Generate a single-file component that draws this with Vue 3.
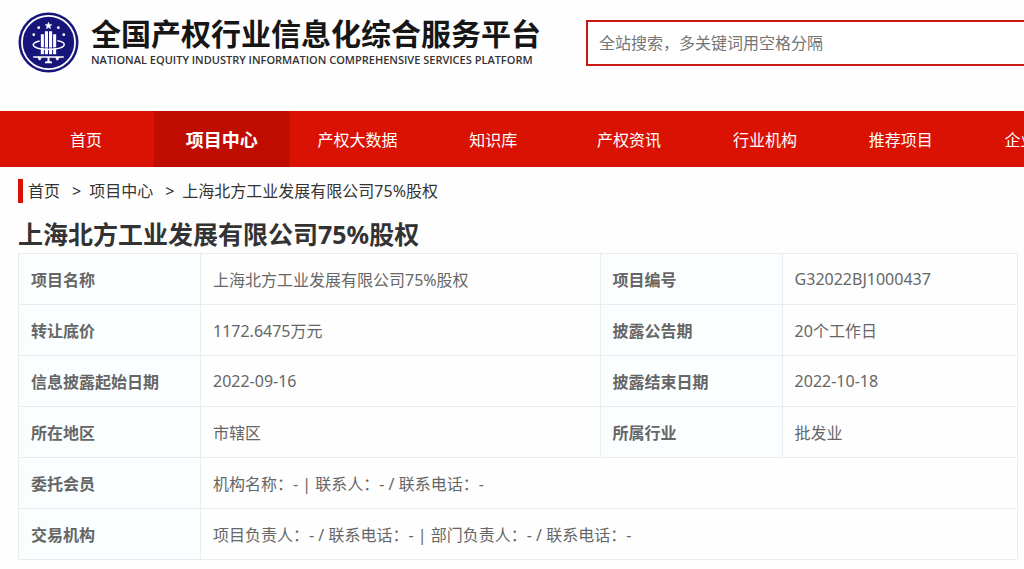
<script setup>
const navItems = ['首页', '项目中心', '产权大数据', '知识库', '产权资讯', '行业机构', '推荐项目', '企业服务']
const activeItem = '项目中心'

const projectName = '上海北方工业发展有限公司75%股权'

const rows = [
  [['项目名称', projectName], ['项目编号', 'G32022BJ1000437']],
  [['转让底价', '1172.6475万元'], ['披露公告期', '20个工作日']],
  [['信息披露起始日期', '2022-09-16'], ['披露结束日期', '2022-10-18']],
  [['所在地区', '市辖区'], ['所属行业', '批发业']],
  [['委托会员', '机构名称：- | 联系人：- / 联系电话：-']],
  [['交易机构', '项目负责人：- / 联系电话：- | 部门负责人：- / 联系电话：-']],
]
</script>

<template>
  <div class="page">
    <header class="header">
      <a class="brand" href="#">
        <svg class="emblem" viewBox="0 0 62 62" aria-hidden="true">
          <circle cx="31" cy="31" r="30.5" fill="#17147a" />
          <circle cx="31" cy="31" r="27" fill="none" stroke="#fff" stroke-width="1.8" />
          <g fill="#fff">
            <path d="M31 10.500l.9 2.200 2.400.2-1.800 1.600.5 2.400-2-1.300-2 1.300.5-2.400-1.800-1.600 2.400-.2z" stroke="#fff" stroke-width=".6" />
            <circle cx="21" cy="16" r="1.400" />
            <circle cx="41" cy="16" r="1.400" />
            <circle cx="16" cy="23" r="1.400" />
            <circle cx="46.500" cy="23" r="1.400" />
            <path d="M23.200 22.500h3.100V43h-3.100zM27.300 19.500h3.200V43h-3.200zM31.500 19.500h3.200V43h-3.200zM35.700 22.500h3.100V43h-3.100z" />
            <path d="M15.500 45h31v1.600h-4.500l-1.300 2.400h-1.400L38 46.600h-6v3.200l2.600.8v1.400h-7.200v-1.400l2.600-.8v-3.200h-6l-1.300 2.400h-1.400L20 46.600h-4.500z" />
          </g>
          <g fill="none">
            <path d="M20 35.300c3.500 1 7 1.300 11 1.300s7.500-.3 11-1.300" stroke="#17147a" stroke-width=".8" />
            <path
              d="M22 29.500c-4.500 1-6.500 2.300-6.500 3.900 0 2.700 7 4.700 15.500 4.700s16-2 16-5c0-1.900-2.500-3.300-7-3.900"
              stroke="#fff"
              stroke-width="1.500"
            />
          </g>
        </svg>
        <span class="brand-text">
          <span class="brand-name">全国产权行业信息化综合服务平台</span>
          <span class="brand-sub">NATIONAL EQUITY INDUSTRY INFORMATION COMPREHENSIVE SERVICES PLATFORM</span>
        </span>
      </a>
      <input class="search" type="text" aria-label="全站搜索" placeholder="全站搜索，多关键词用空格分隔" />
    </header>

    <nav class="nav">
      <a
        v-for="item in navItems"
        :key="item"
        href="#"
        class="nav-item"
        :class="{ active: item === activeItem }"
      >{{ item }}</a>
    </nav>

    <main class="main">
      <div class="crumbs">
        <a href="#">首页</a>
        <span class="sep">&gt;</span>
        <a href="#">项目中心</a>
        <span class="sep">&gt;</span>
        <span>{{ projectName }}</span>
      </div>

      <h1 class="title">{{ projectName }}</h1>

      <table class="info">
        <colgroup>
          <col class="label-col" />
          <col class="wide-col" />
          <col class="label-col" />
          <col />
        </colgroup>
        <tbody>
          <tr v-for="(row, i) in rows" :key="i">
            <template v-for="cell in row" :key="cell[0]">
              <th scope="row">{{ cell[0] }}</th>
              <td :colspan="row.length === 1 ? 3 : 1">{{ cell[1] }}</td>
            </template>
          </tr>
        </tbody>
      </table>
    </main>
  </div>
</template>

<style>
body {
  background: #fefefe;
}
</style>

<style scoped>
.page {
  overflow: hidden;
  font-family: "Noto Sans", "Noto Sans CJK SC", sans-serif;
  font-size: 16px;
  color: #333;
}

a {
  color: inherit;
  text-decoration: none;
}

.header {
  display: flex;
  align-items: flex-start;
  padding: 12px 0 38px 18px;
}

.brand {
  display: flex;
  flex: none;
  gap: 12px;
  width: 568px;
  color: #161616;
}

.emblem {
  flex: none;
  width: 61px;
  height: 61px;
}

.brand-text {
  display: flex;
  flex-direction: column;
  padding-top: 3px;
  white-space: nowrap;
}

.brand-name {
  font-size: 30px;
  font-weight: 700;
  line-height: 38px;
}

.brand-sub {
  color: #333;
  font-family: "Open Sans", "Noto Sans", sans-serif;
  font-size: 11px;
  font-weight: 600;
  line-height: 14px;
}

.search {
  flex: none;
  box-sizing: border-box;
  width: 560px;
  height: 46px;
  margin-top: 8px;
  padding: 0 11px;
  border: 2px solid #c81a14;
  background: #fff;
  font: inherit;
}

.search::placeholder {
  color: #757575;
  opacity: 1;
}

.nav {
  display: flex;
  padding-left: 18px;
  background: #d91204;
  color: #fff;
}

.nav-item {
  flex: none;
  width: 13.5%;
  padding-top: 2px;
  line-height: 54px;
  text-align: center;
}

.nav-item.active {
  background: #c00d02;
  font-size: 18px;
  font-weight: 700;
}

.main {
  padding: 12px 6px 0 18px;
}

.crumbs {
  display: flex;
  padding-left: 5px;
  border-left: 5px solid #d91204;
  line-height: 24px;
}

.sep {
  margin: 0 8px 0 12px;
}

.title {
  margin: 12px 0 0;
  font-size: 25px;
  font-weight: 700;
  line-height: 38px;
}

.info {
  width: 100%;
  table-layout: fixed;
  border-collapse: collapse;
  color: #666;
}

.label-col {
  width: 182px;
}

.wide-col {
  width: 40%;
}

.info th,
.info td {
  box-sizing: border-box;
  height: 51px;
  padding: 0 11px 1px 12px;
  border: 1px solid #e8eeee;
  text-align: left;
}

.info th {
  background: #fafeff;
  font-weight: 700;
}
</style>
